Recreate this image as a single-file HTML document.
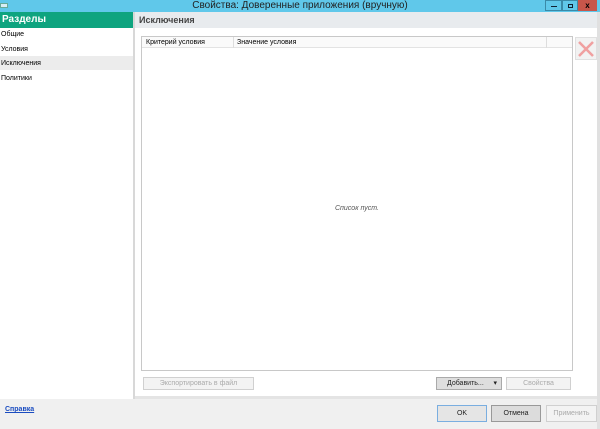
<!DOCTYPE html><html><head><style>
body{margin:0;width:600px;height:429px;overflow:hidden;font-family:"Liberation Sans",sans-serif;font-size:7px;background:#fff;position:relative}
div{position:absolute;box-sizing:border-box}
.b{border:1px solid #d0d0d0;background:#f3f3f3;color:#aaa;text-align:center;line-height:11px;font-size:7px}
</style></head><body>
<div style="left:0;top:0;width:600px;height:12px;background:#60c8ea"></div>
<div style="left:0;top:3px;width:8px;height:5px;background:#d8eef5;border:1px solid #6a9"></div>
<div style="left:0;top:0;width:600px;text-align:center;font-size:10px;line-height:12px;color:#222">Свойства: Доверенные приложения (вручную)</div>
<div style="left:545px;top:0;width:17px;height:11px;border:1px solid #3a8aa8;background:#60c8ea"><div style="left:5px;top:5px;width:6px;height:1px;background:#123"></div></div>
<div style="left:562px;top:0;width:16px;height:11px;border:1px solid #3a8aa8;background:#60c8ea"><div style="left:5px;top:3px;width:5px;height:4px;border:1px solid #123"></div></div>
<div style="left:578px;top:0;width:19px;height:11px;background:#c7564a;color:#000;font-size:8px;text-align:center;line-height:11px;font-weight:bold">x</div>
<div style="left:0;top:12px;width:133px;height:16px;background:#0ea47f;color:#fff;font-size:10px;font-weight:bold;line-height:16px;padding-left:2px">Разделы</div>
<div style="left:133px;top:12px;width:2px;height:387px;background:#d8d8d8"></div>
<div style="left:1px;top:31px;font-size:7px">Общие</div>
<div style="left:1px;top:46px">Условия</div>
<div style="left:0;top:56px;width:133px;height:14px;background:#ececec"></div>
<div style="left:1px;top:60px">Исключения</div>
<div style="left:1px;top:75px">Политики</div>
<div style="left:135px;top:12px;width:465px;height:16px;background:#e8ebee;font-size:9px;font-weight:bold;color:#444;line-height:16px;padding-left:4px">Исключения</div>
<div style="left:141px;top:36px;width:432px;height:335px;border:1px solid #c8c8c8;background:#fff"></div>
<div style="left:142px;top:37px;width:430px;height:11px;background:#fafafa;border-bottom:1px solid #e3e3e3"></div>
<div style="left:233px;top:37px;width:1px;height:11px;background:#ddd"></div>
<div style="left:546px;top:37px;width:1px;height:11px;background:#ddd"></div>
<div style="left:146px;top:39px;font-size:7px">Критерий условия</div>
<div style="left:237px;top:39px">Значение условия</div>
<div style="left:141px;top:205px;width:432px;text-align:center;font-style:italic;color:#555">Список пуст.</div>
<div style="left:575px;top:37px;width:22px;height:23px;background:#f2f2f2;border:1px solid #e0e0e0"><svg width="20" height="21" style="position:absolute;left:0;top:0"><path d="M3 4L17 18M17 4L3 18" stroke="#f0a0a0" stroke-width="2.5"/></svg></div>
<div class="b" style="left:143px;top:377px;width:111px;height:13px">Экспортировать в файл</div>
<div class="b" style="left:436px;top:377px;width:66px;height:13px;background:#dedede;border-color:#aaa;color:#222;text-align:left;padding-left:10px">Добавить... <span style="position:absolute;right:4px">▾</span></div>
<div class="b" style="left:506px;top:377px;width:65px;height:13px">Свойства</div>
<div style="left:135px;top:396px;width:465px;height:3px;background:#e4e4e4"></div>
<div style="left:0;top:399px;width:600px;height:30px;background:#f0f0f0"></div>
<div style="left:5px;top:406px;color:#1a4cc0;text-decoration:underline;font-weight:bold">Справка</div>
<div class="b" style="left:437px;top:405px;width:50px;height:17px;line-height:15px;background:#e5e5e5;border-color:#7aaee0;color:#222">OK</div>
<div class="b" style="left:491px;top:405px;width:50px;height:17px;line-height:15px;background:#dcdcdc;border-color:#999;color:#222">Отмена</div>
<div class="b" style="left:546px;top:405px;width:51px;height:17px;line-height:15px">Применить</div>
<div style="left:597px;top:12px;width:3px;height:417px;background:#e0e0e0"></div>
</body></html>
